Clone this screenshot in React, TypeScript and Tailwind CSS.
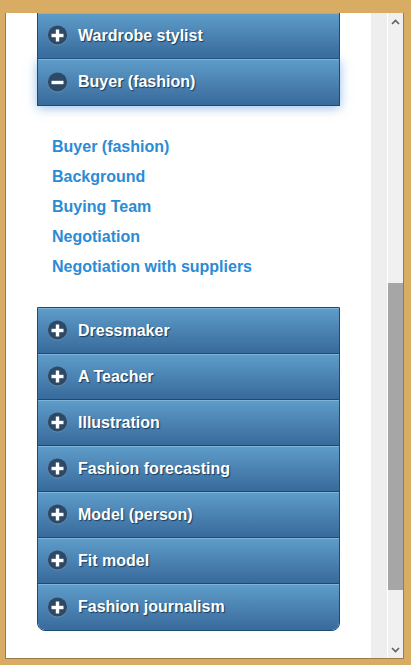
import React from "react";

const font = { fontFamily: '"Liberation Sans", Arial, sans-serif' };

function Icon({ open }: { open?: boolean }) {
  return (
    <svg width="21" height="21" viewBox="0 0 21 21" className="shrink-0">
      <circle cx="10.5" cy="10.5" r="10" fill="#6d8cab" />
      <circle cx="10.5" cy="10" r="9.6" fill="#2c4968" />
      <rect x="4.5" y="8.8" width="12" height="3.4" fill="#fff" />
      {!open && <rect x="8.8" y="4.5" width="3.4" height="12" fill="#fff" />}
    </svg>
  );
}

function Header({ label, open, last }: { label: string; open?: boolean; last?: boolean }) {
  return (
    <div
      className={
        "h-[46px] flex items-center pl-[9px] bg-gradient-to-b from-[#5f9dca] to-[#386a9c] shadow-[inset_0_1px_0_#7eb3da] " +
        (last ? "" : "border-b border-[#1b4a72]")
      }
    >
      <Icon open={open} />
      <span className="ml-[10px] text-white font-bold text-[16px] [text-shadow:1px_1px_1px_#1a3a5c]">
        {label}
      </span>
    </div>
  );
}

export default function App() {
  const links = ["Buyer (fashion)", "Background", "Buying Team", "Negotiation", "Negotiation with suppliers"];
  const rows = [
    "Dressmaker",
    "A Teacher",
    "Illustration",
    "Fashion forecasting",
    "Model (person)",
    "Fit model",
    "Fashion journalism",
  ];
  return (
    <div className="w-[411px] h-[665px] bg-[#d8ac63] pt-[13px] pl-[5px] pr-[7px] pb-[6px]" style={font}>
      <div className="h-full flex border-l border-r border-b border-[#9a7a48]">
        <div className="w-[365px] h-full bg-white overflow-hidden">
          <div className="ml-[31px] w-[303px]">
            <div className="border-x border-[#1b4a72]">
              <Header label="Wardrobe stylist" />
            </div>
            <div className="border border-t-0 border-[#1b4a72] shadow-[0_2px_10px_rgba(70,140,210,0.55)] relative">
              <Header label="Buyer (fashion)" open last />
            </div>
            <div className="pt-[26px] pb-[25px] pl-[15px]">
              {links.map((l) => (
                <div key={l} className="h-[30px] leading-[30px] text-[16px] font-bold text-[#2b8bd5]">
                  {l}
                </div>
              ))}
            </div>
            <div className="border border-[#1b4a72] rounded-b-[8px] overflow-hidden">
              {rows.map((r, i) => (
                <Header key={r} label={r} last={i === rows.length - 1} />
              ))}
            </div>
          </div>
        </div>
        <div className="w-[16px] h-full bg-[#eeeeee]" />
        <div className="w-[1px] h-full bg-white" />
        <div className="flex-1 h-full bg-[#f0f0f0] flex flex-col items-center">
          <div className="h-[17px] flex items-center justify-center">
            <svg width="9" height="6" viewBox="0 0 9 6">
              <path d="M1 5 L4.5 1.5 L8 5" stroke="#606060" strokeWidth="1.6" fill="none" />
            </svg>
          </div>
          <div className="h-[253px]" />
          <div className="w-full h-[307px] bg-[#a6a6a6]" />
          <div className="flex-1" />
          <div className="h-[17px] flex items-center justify-center">
            <svg width="9" height="6" viewBox="0 0 9 6">
              <path d="M1 1 L4.5 4.5 L8 1" stroke="#606060" strokeWidth="1.6" fill="none" />
            </svg>
          </div>
        </div>
      </div>
    </div>
  );
}
